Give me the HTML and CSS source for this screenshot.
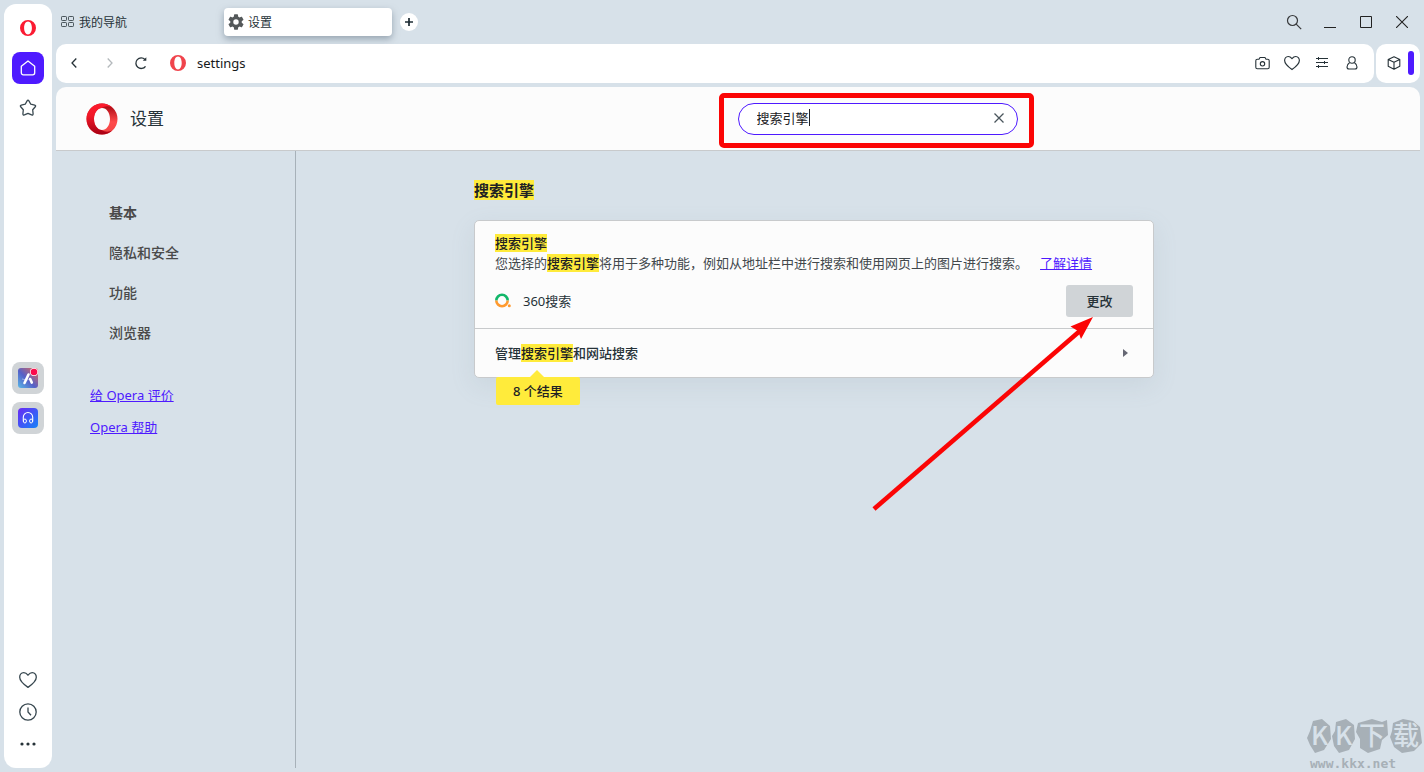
FILE: index.html
```html
<!DOCTYPE html>
<html lang="zh-CN">
<head>
<meta charset="utf-8">
<title>设置</title>
<link rel="stylesheet" href="styles.css">
</head>
<body>
<svg class="defs" width="0" height="0" aria-hidden="true">
  <defs>
    <linearGradient id="ringOuter" x1="0" y1="0" x2="0" y2="1"><stop offset="0" stop-color="#ff1b2d"/><stop offset="0.4" stop-color="#f01828"/><stop offset="1" stop-color="#a70014"/></linearGradient>
    <linearGradient id="ringInner" x1="0" y1="0" x2="0" y2="1"><stop offset="0" stop-color="#a0000c"/><stop offset="0.6" stop-color="#ff4b4b"/><stop offset="1" stop-color="#f04444"/></linearGradient>
    <linearGradient id="appA" x1="0" y1="1" x2="1" y2="0"><stop offset="0" stop-color="#58b8e8"/><stop offset="0.45" stop-color="#5560c8"/><stop offset="1" stop-color="#ee6a50"/></linearGradient>
    <linearGradient id="appB" x1="0" y1="0" x2="1" y2="1"><stop offset="0" stop-color="#6a28f4"/><stop offset="1" stop-color="#1684f8"/></linearGradient>
  </defs>
</svg>
<div class="browser">
  <aside class="sidebar">
    <button class="side-button" aria-label="Opera"><svg width="16" height="16" viewBox="0 0 16 16"><path fill="#fb1b32" fill-rule="evenodd" d="M8 0a8 8 0 1 0 0 16A8 8 0 0 0 8 0zm0 1.600c2.300 0 3.900 2.800 3.900 6.400s-1.600 6.400-3.900 6.400S4.100 11.600 4.100 8 5.700 1.600 8 1.600z"/></svg></button>
    <button class="side-button home" aria-label="主页"><svg width="16" height="16" viewBox="0 0 16 16" fill="none" stroke="#fff" stroke-width="1.300" stroke-linejoin="round"><path d="M1.300 6.300 8 .9l6.700 5.400v6.500a2 2 0 0 1-2 2H3.300a2 2 0 0 1-2-2z"/></svg></button>
    <button class="side-button" aria-label="书签"><svg width="18" height="18" viewBox="0 0 18 18" fill="none" stroke="#37474f" stroke-width="1.300" stroke-linejoin="round"><path d="M8.100 1.900q.9-1.400 1.800 0l1.900 3.300 3.900.9q1.500.5.600 1.700l-2.600 3 .4 4q0 1.600-1.500 1.100L9 14.400l-3.600 1.500q-1.500.5-1.500-1.100l.4-4-2.600-3Q.8 6.600 2.300 6.100l3.900-.9z"/></svg></button>
    <div class="side-apps">
      <button class="side-button app" aria-label="Aria"><svg width="22" height="22" viewBox="0 0 22 22"><rect x="1" y="1" width="20" height="20" rx="3" fill="url(#appA)"/><path d="M11.500 7.500 7.500 16M13.200 12l1.600 3.600" stroke="#fff" stroke-width="2.600" stroke-linecap="round"/><path d="M5 12q5 2 9 0" stroke="#fff" stroke-opacity=".4" fill="none"/><circle cx="17" cy="5" r="4" fill="#fff"/><circle cx="17" cy="5" r="3.300" fill="#fa0a4c"/></svg></button>
      <button class="side-button app" aria-label="播放器"><svg width="22" height="22" viewBox="0 0 22 22" fill="none"><rect x="1" y="1" width="20" height="20" rx="4" fill="url(#appB)"/><path d="M6.300 14.500V10.200a4.700 4.700 0 0 1 9.400 0v4.300" stroke="#fff" stroke-width="1.100"/><ellipse cx="7.900" cy="14" rx="1.500" ry="2" stroke="#fff"/><ellipse cx="14.100" cy="14" rx="1.500" ry="2" stroke="#fff"/></svg></button>
    </div>
    <div class="side-bottom">
      <button class="side-button" aria-label="我的收藏"><svg width="18" height="18" viewBox="0 0 18 18" fill="none" stroke="#37474f" stroke-width="1.300" stroke-linejoin="round"><path d="M9 4.200Q7 1.700 4.800 1.700C1.900 1.700.7 4 .7 6.300c0 4 5 7.800 8.300 10.100 3.300-2.300 8.300-6.100 8.300-10.100 0-2.300-1.200-4.600-4.100-4.600Q11 1.700 9 4.200z"/></svg></button>
      <button class="side-button" aria-label="历史记录"><svg width="18" height="18" viewBox="0 0 18 18" fill="none" stroke="#37474f" stroke-width="1.300"><circle cx="9" cy="9" r="8.200"/><path d="M9 4.500V9l3 3.300"/></svg></button>
      <button class="side-button" aria-label="更多"><svg width="16" height="4" viewBox="0 0 16 4" fill="#263238"><circle cx="2" cy="2" r="1.600"/><circle cx="8" cy="2" r="1.600"/><circle cx="14" cy="2" r="1.600"/></svg></button>
    </div>
  </aside>

  <div class="main">
    <header class="tab-bar">
      <button class="tab"><svg width="13" height="12" viewBox="0 0 13 12" fill="none" stroke="#4b565c"><rect x=".5" y=".5" width="5" height="4" rx=".7"/><rect x="7.500" y=".5" width="5" height="4" rx=".7"/><rect x=".5" y="6.500" width="5" height="4" rx=".7"/><rect x="7.500" y="6.500" width="5" height="4" rx=".7"/></svg><span>我的导航</span></button>
      <button class="tab tab-active"><svg width="16" height="16" viewBox="2 2 20 20" fill="#54585a"><path d="M19.140 12.940c.04-.3.060-.610.060-.940s-.020-.640-.070-.940l2.030-1.580a.5.5 0 0 0 .120-.610l-1.920-3.320a.5.5 0 0 0-.590-.220l-2.390.960a7 7 0 0 0-1.620-.940l-.360-2.540A.5.5 0 0 0 13.920 2.400h-3.840a.5.5 0 0 0-.470.410l-.360 2.540a7 7 0 0 0-1.620.940l-2.390-.960a.5.5 0 0 0-.590.220L2.740 8.870a.5.5 0 0 0 .120.610l2.030 1.580a6 6 0 0 0 0 1.880l-2.030 1.580a.5.5 0 0 0-.120.610l1.920 3.320c.120.220.370.290.590.220l2.390-.960c.5.380 1.030.700 1.620.940l.360 2.540c.050.240.240.410.480.410h3.840c.240 0 .440-.170.470-.410l.360-2.540a7 7 0 0 0 1.620-.940l2.390.960c.220.080.470 0 .590-.220l1.920-3.320a.5.5 0 0 0-.120-.610zM12 15.400a3.400 3.400 0 1 1 0-6.800 3.400 3.400 0 0 1 0 6.800z"/></svg><span>设置</span></button>
      <button class="new-tab" aria-label="新标签页"><svg width="8" height="8" viewBox="0 0 8 8" stroke="#1d2b33" stroke-width="1.700"><path d="M4 0v8M0 4h8"/></svg></button>
      <div class="window-controls">
        <button aria-label="搜索标签页"><svg width="16" height="16" viewBox="0 0 16 16" fill="none" stroke="#37393b" stroke-width="1.200"><circle cx="6.500" cy="6.500" r="5"/><path d="m10.200 10.200 5 5"/></svg></button>
        <button aria-label="最小化"><svg width="12" height="12" viewBox="0 0 12 12" stroke="#222"><path d="M0 11.500h12"/></svg></button>
        <button aria-label="最大化"><svg width="12" height="12" viewBox="0 0 12 12" fill="none" stroke="#222"><path d="M.5.5h11v11H.5z"/></svg></button>
        <button aria-label="关闭"><svg width="12" height="12" viewBox="0 0 12 12" stroke="#222" stroke-width="1.100"><path d="m0 0 12 12M12 0 0 12"/></svg></button>
      </div>
    </header>

    <div class="toolbar">
      <div class="address-bar">
        <button class="nav-button" aria-label="后退"><svg width="6" height="10" viewBox="0 0 6 10" fill="none" stroke="#263238" stroke-width="1.300"><path d="M5.300.5 1 5l4.300 4.500"/></svg></button>
        <button class="nav-button" aria-label="前进"><svg width="6" height="10" viewBox="0 0 6 10" fill="none" stroke="#b4b9bc" stroke-width="1.300"><path d="M.7.5 5 5 .7 9.500"/></svg></button>
        <button class="nav-button reload" aria-label="重新加载"><svg width="14" height="14" viewBox="0 0 14 14" fill="none" stroke="#263238" stroke-width="1.300"><path d="M11.500 10.300A5.300 5.300 0 1 1 11 3.500"/><path d="M12.300 1.200v3.600H8.800z" fill="#263238" stroke="none"/></svg></button>
        <svg class="site-logo" width="16" height="16" viewBox="0 0 16 16"><path fill="#f0444c" fill-rule="evenodd" d="M8 0a8 8 0 1 0 0 16A8 8 0 0 0 8 0zm0 1.600c2.300 0 3.700 2.800 3.700 6.400s-1.400 6.400-3.700 6.400S4.300 11.600 4.300 8 5.700 1.600 8 1.600z"/></svg>
        <span class="url">settings</span>
        <div class="actions">
          <button aria-label="快照"><svg width="15" height="14" viewBox="0 0 15 14" fill="none" stroke="#263238" stroke-width="1.100" stroke-linejoin="round"><path d="M5 1.500h5l1 1.700h1.700q1.500 0 1.500 1.500v6.500q0 1.500-1.500 1.500H2.300q-1.500 0-1.500-1.500V4.700q0-1.500 1.500-1.500H4z"/><circle cx="7.500" cy="7.800" r="2.200"/></svg></button>
          <button aria-label="收藏"><svg width="16" height="16" viewBox="0 0 18 18" fill="none" stroke="#263238" stroke-width="1.300" stroke-linejoin="round"><path d="M9 4.200Q7 1.700 4.800 1.700C1.900 1.700.7 4 .7 6.300c0 4 5 7.800 8.300 10.100 3.300-2.300 8.300-6.100 8.300-10.100 0-2.300-1.200-4.600-4.100-4.600Q11 1.700 9 4.200z"/></svg></button>
          <button aria-label="简易设置"><svg width="12" height="12" viewBox="0 0 12 12" fill="none" stroke="#263238"><path d="M0 1.500h12M0 5.500h12M0 9.500h12M2.500 0v3M8.500 4v3M2.500 8v3"/></svg></button>
          <button aria-label="个人资料"><svg width="12" height="14" viewBox="0 0 12 14" fill="none" stroke="#263238" stroke-width="1.100"><circle cx="6" cy="4" r="3.200"/><path d="M3.500 6.700Q1 8.200 1 11q0 2 2 2h6q2 0 2-2 0-2.800-2.500-4.300"/></svg></button>
        </div>
      </div>
      <div class="extensions">
        <button aria-label="扩展"><svg width="14" height="14" viewBox="0 0 14 14" fill="none" stroke="#263238" stroke-width="1.100" stroke-linejoin="round"><path d="M7 .8 12.800 3.500v6.800L7 13.200 1.200 10.300V3.500zM1.200 3.500 7 6.300l5.800-2.800M7 6.300v6.900"/></svg></button>
        <span class="handle"></span>
      </div>
    </div>

    <div class="page">
      <header class="page-header">
        <div class="brand">
          <svg width="32" height="32" viewBox="0 0 32 32"><path fill="url(#ringInner)" fill-rule="evenodd" d="M16 .5a15.500 15.500 0 1 0 0 31 15.500 15.500 0 0 0 0-31zM16 5c4.500 0 8 4.800 8 11s-3.500 11-8 11-8-4.800-8-11 3.500-11 8-11z"/><path fill="url(#ringOuter)" d="M16 .5a15.500 15.500 0 1 0 0 31q5.700 0 10.300-3.900-6 2.600-10.800-.6C11.300 26.500 8 21.900 8 16S11.300 5.500 15.500 5q4.800-3.200 10.800-.6Q21.700.5 16 .5z"/></svg>
          <h1>设置</h1>
        </div>
        <div class="search-area">
          <div class="search-highlight">
            <div class="search-field">
              <input class="search-input" type="text" value="搜索引擎" aria-label="搜索设置">
              <span class="caret"></span>
              <button class="clear" aria-label="清除"><svg width="10" height="10" viewBox="0 0 10 10" stroke="#4a555c" stroke-width="1.300"><path d="m.5.500 9 9M9.500.5l-9 9"/></svg></button>
            </div>
          </div>
        </div>
      </header>

      <div class="page-body">
        <nav class="page-nav">
          <a class="nav-item current" href="#basic">基本</a>
          <a class="nav-item" href="#privacy">隐私和安全</a>
          <a class="nav-item" href="#features">功能</a>
          <a class="nav-item" href="#browser">浏览器</a>
          <div class="nav-links">
            <a class="link" href="#rate">给 Opera 评价</a>
            <a class="link" href="#help">Opera 帮助</a>
          </div>
        </nav>
        <main class="content">
          <section class="section">
            <h2><mark>搜索引擎</mark></h2>
            <div class="card">
              <div class="engine">
                <p class="label"><mark>搜索引擎</mark></p>
                <p class="description">您选择的<mark>搜索引擎</mark>将用于多种功能，例如从地址栏中进行搜索和使用网页上的图片进行搜索。<a class="link more" href="#learn">了解详情</a></p>
                <div class="engine-row">
                  <svg width="16" height="16" viewBox="0 0 16 16" fill="none" stroke-width="2.600"><path d="M1.300 7.500a5.700 5.700 0 1 1 11.400 0" stroke="#12b76a"/><path d="M1.300 7.500a5.700 5.700 0 0 0 11.400 0" stroke="#ff9a2e"/><circle cx="14.300" cy="12.700" r="1.500" fill="#ff9a2e"/></svg>
                  <span>360搜索</span>
                  <button class="change">更改</button>
                </div>
              </div>
              <button class="manage">
                <span>管理<mark>搜索引擎</mark>和网站搜索</span>
                <svg width="5" height="8" viewBox="0 0 5 8" fill="#666874"><path d="M0 0 5 4 0 8z"/></svg>
              </button>
              <div class="result-bubble">8 个结果</div>
              <svg class="pointer" width="224" height="196" viewBox="0 0 224 196"><path d="M4 193 211 14" stroke="#fb0505" stroke-width="4.600"/><path d="M223 1 211 23 208 15 200.500 10.500z" fill="#fb0505"/></svg>
            </div>
          </section>
        </main>
      </div>
    </div>
  </div>
  <div class="watermark">
    <svg width="116" height="46" viewBox="0 -8 116 46"><g fill="#a7b0b7"><path d="m6 3 9-2 8 7 1 13-7 11-9 3-5-8-3-7 3-7z"/><path d="m29 4 10-3 8 6 1 14-6 11-10 3-5-7-2-10 3-5z"/><path d="m51 5 14-4 10 3 5-2 1 15-6 5-2 9-12 4-8-5 0-9-4-7z"/><path d="m86 5 10-4 10 2 7 6 2 16-8 8-12 2-8-6-4-10 2-6z"/></g><g class="watermark-letters"><text x="4" y="27">K</text><text x="28" y="27">K</text><text x="52" y="27">下</text><text x="86" y="27">载</text></g></svg>
    <span>www.kkx.net</span>
  </div>
</div>
</body>
</html>
```
FILE: styles.css
```css
* { box-sizing: border-box; }

body {
  margin: 0;
  background: #d7e1e9;
  color: #263238;
  font: 13px/20px "Noto Sans", "Noto Sans CJK SC", sans-serif;
}

button {
  display: flex;
  align-items: center;
  justify-content: center;
  padding: 0;
  border: 0;
  background: none;
  color: inherit;
  font: inherit;
}

svg { display: block; flex: none; }
.defs { position: absolute; }
h1, h2, p { margin: 0; }

mark {
  background: #ffeb3b;
  color: #202124;
}

.link { color: #4e1aff; text-decoration: underline; }

.browser {
  position: relative;
  display: flex;
  gap: 4px;
  min-height: 100vh;
  padding: 0 4px;
}

/* Sidebar */
.sidebar {
  display: flex;
  flex: none;
  flex-direction: column;
  align-items: center;
  gap: 8px;
  width: 48px;
  margin: 4px 0;
  padding: 8px;
  border-radius: 12px;
  background: #fff;
}

.side-button { width: 32px; height: 32px; border-radius: 8px; }
.home { background: #4e1aff; }
.app { background: #d0d4d7; }

.side-apps {
  display: flex;
  flex: 1;
  flex-direction: column;
  justify-content: center;
  gap: 8px;
  padding-top: 8px;
}

.side-bottom { display: flex; flex-direction: column; }

.main {
  display: flex;
  flex: 1;
  flex-direction: column;
  min-width: 0;
}

/* Tabs */
.tab-bar {
  display: flex;
  align-items: center;
  height: 44px;
}

.tab {
  justify-content: flex-start;
  gap: 5px;
  width: 168px;
  height: 28px;
  padding: 0 5px;
  border-radius: 4px;
  font-size: 12px;
}

.tab span { padding-top: 2px; }

.tab-active {
  gap: 4px;
  padding: 0 4px;
  background: #fff;
  box-shadow: 0 3px 7px #6b7b8a99;
}

.new-tab {
  width: 18px;
  height: 18px;
  margin-left: 8px;
  border-radius: 50%;
  background: #fff;
}

.window-controls { display: flex; margin-left: auto; }
.window-controls button { width: 36px; height: 32px; }

/* Toolbar */
.toolbar { display: flex; gap: 2px; height: 39px; }

.address-bar {
  display: flex;
  flex: 1;
  align-items: center;
  padding: 0 7px 1px 0;
  border-radius: 10px;
  background: #fff;
}

.nav-button { width: 36px; height: 32px; }
.reload { width: 26px; }
.site-logo { margin-left: 16px; }
.url { margin-left: 11px; color: #16181a; }
.actions { display: flex; margin-left: auto; }
.actions button { width: 30px; height: 32px; }

.extensions {
  display: flex;
  align-items: center;
  justify-content: space-between;
  width: 44px;
  padding: 0 6px 1px 11px;
  border-radius: 10px;
  background: #fff;
}

.handle {
  width: 6px;
  height: 24px;
  border-radius: 3px;
  background: #4e1aff;
}

/* Settings page */
.page {
  display: flex;
  flex: 1;
  flex-direction: column;
  margin: 4px 0;
}

.page-header {
  display: flex;
  align-items: center;
  height: 64px;
  border-bottom: 1px solid #c8cacc;
  border-radius: 10px 10px 0 0;
  background: #fcfcfc;
}

.brand {
  display: flex;
  flex: none;
  align-items: center;
  gap: 12px;
  width: 276px;
  padding-left: 30px;
}

h1 { font-size: 17px; font-weight: 400; line-height: 24px; }
.search-area { display: flex; flex: 1; justify-content: center; }

.search-highlight {
  margin-top: 3px;
  padding: 5px 11px 8px 14px;
  border: 5px solid #fb0505;
  border-radius: 5px;
}

.search-field { position: relative; width: 280px; height: 32px; }

.search-input {
  width: 100%;
  height: 100%;
  padding: 0 40px 2px 18px;
  border: 1px solid #4e1aff;
  border-radius: 16px;
  outline: 0;
  background: #fff;
  color: #202124;
  font: inherit;
}

.caret {
  position: absolute;
  top: 6px;
  left: 71px;
  width: 1px;
  height: 17px;
  background: #202124;
}

.clear {
  position: absolute;
  top: 5px;
  right: 9px;
  width: 20px;
  height: 20px;
}

.page-body { display: flex; flex: 1; }

.page-nav {
  display: flex;
  flex: none;
  flex-direction: column;
  width: 240px;
  padding: 42px 34px;
  border-right: 1px solid #a7b1b9;
}

.nav-item {
  padding: 10px 19px;
  color: #4a4a4a;
  font-size: 14px;
  font-weight: 500;
  text-decoration: none;
}

.current { font-weight: 700; }

.nav-links {
  display: flex;
  flex-direction: column;
  align-items: flex-start;
  gap: 12px;
  margin-top: 32px;
}

.content {
  display: flex;
  flex: 1;
  justify-content: center;
  padding: 29px 88px 0 0;
}

.section { width: 680px; }
h2 { font-size: 15px; font-weight: 700; line-height: 20px; }

.card {
  position: relative;
  margin-top: 20px;
  border: 1px solid #c8cacc;
  border-radius: 5px;
  background: #fcfcfc;
  box-shadow: 0 8px 24px #8296a624;
}

.engine { padding: 12px 20px 11px; border-bottom: 1px solid #c8cacc; }
.label { font-weight: 500; }
.description { color: #42484c; }
.description mark { font-weight: 500; }
.more { margin-left: 12px; }

.engine-row {
  display: flex;
  align-items: center;
  gap: 12px;
  margin-top: 12px;
}

.change {
  width: 67px;
  height: 32px;
  margin-left: auto;
  border-radius: 3px;
  background: #d0d4d7;
  font-weight: 500;
}

.manage {
  justify-content: space-between;
  width: 100%;
  height: 48px;
  padding: 0 25px 0 20px;
  font-weight: 500;
}

.result-bubble {
  position: absolute;
  top: 156px;
  left: 21px;
  padding: 4px 17px;
  border-radius: 2px;
  background: #ffeb3b;
  color: #202124;
  font-weight: 500;
}

.result-bubble::before {
  content: "";
  position: absolute;
  bottom: 100%;
  left: 34px;
  border: 7px solid transparent;
  border-top: 0;
  border-bottom-color: #ffeb3b;
}

.pointer {
  position: absolute;
  top: 95px;
  left: 395px;
  pointer-events: none;
}

.watermark {
  position: absolute;
  right: 1px;
  bottom: 0;
  width: 116px;
  color: #a7b0b7;
  font: 700 13px/16px "DejaVu Sans Mono", monospace;
}

.watermark span { display: block; padding-left: 3px; }

.watermark-letters {
  fill: #d7e1e9;
  font: 500 26px "Noto Sans CJK SC", sans-serif;
}
```
